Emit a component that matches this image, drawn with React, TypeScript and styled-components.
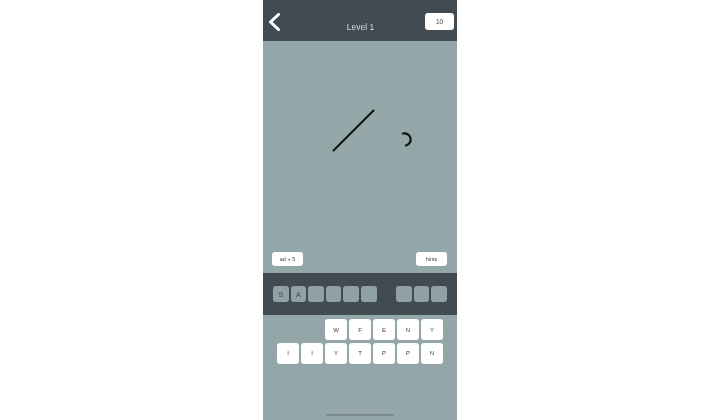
import React from "react";
import styled, { createGlobalStyle } from "styled-components";

const Global = createGlobalStyle`
  html, body { margin: 0; padding: 0; background: #ffffff; }
  body {
    font-family: "Liberation Sans", Arial, sans-serif;
    -webkit-font-smoothing: antialiased;
  }
`;

const Phone = styled.div`
  width: 194px;
  height: 420px;
  margin: 0 auto;
  display: flex;
  flex-direction: column;
  background: #93a6a8;
  overflow: hidden;
  will-change: transform;
`;

const Header = styled.header`
  height: 41px;
  box-sizing: border-box;
  background: #424a52;
  display: grid;
  grid-template-columns: 1fr auto 1fr;
  align-items: start;
  padding: 13px 3px 0 4px;
`;

const Back = styled.svg`
  width: 14px;
  height: 18px;
  display: block;
`;

const Title = styled.div`
  color: #dadcde;
  font-size: 8.5px;
  line-height: 10px;
  margin-top: 8.5px;
`;

const Badge = styled.div`
  justify-self: end;
  width: 29px;
  height: 17px;
  background: #ffffff;
  border-radius: 3px;
  color: #444;
  font-size: 6.5px;
  display: flex;
  align-items: center;
  justify-content: center;
`;

const Canvas = styled.section`
  height: 232px;
  display: flex;
  flex-direction: column;
`;

const Drawing = styled.svg`
  display: block;
  flex: 1;
  width: 100%;
`;

const ButtonRow = styled.div`
  display: flex;
  justify-content: space-between;
  padding: 0 10px 7px 9px;
`;

const SmallButton = styled.button`
  all: unset;
  width: 31px;
  height: 14px;
  background: #ffffff;
  border-radius: 3px;
  color: #444;
  font-size: 5.5px;
  display: flex;
  align-items: center;
  justify-content: center;
  font-family: "Liberation Sans", Arial, sans-serif;
`;

const AnswerBar = styled.div`
  height: 42px;
  background: #424a52;
  display: flex;
  align-items: center;
  justify-content: center;
  gap: 2px;
`;

const Slot = styled.div<{ $space?: boolean }>`
  width: 15.6px;
  height: 16.5px;
  box-sizing: border-box;
  border-radius: 3px;
  background: ${(p) => (p.$space ? "transparent" : "#8fa1a4")};
  color: #3d4347;
  font-size: 7px;
  display: flex;
  align-items: center;
  justify-content: center;
`;

const Keyboard = styled.div`
  flex: 1;
  display: flex;
  flex-direction: column;
  align-items: center;
  padding-top: 4px;
`;

const Keys = styled.div`
  display: grid;
  grid-template-columns: repeat(7, 21.6px);
  grid-auto-rows: 21px;
  column-gap: 2.4px;
  row-gap: 2.6px;
`;

const Key = styled.div<{ $col?: number }>`
  grid-column: ${(p) => (p.$col ? `${p.$col}` : "auto")};
  background: #ffffff;
  border-radius: 3px;
  color: #444;
  font-size: 6px;
  display: flex;
  align-items: center;
  justify-content: center;
`;

const Spacer = styled.div`
  flex: 1;
`;

const HomeIndicator = styled.div`
  width: 68px;
  height: 2.5px;
  border-radius: 2px;
  background: #7d898c;
  margin-bottom: 4px;
`;

const answer = ["S", "A", "", "", "", "", null, "", "", ""];
const row1 = ["W", "F", "E", "N", "Y"];
const row2 = ["I", "I", "Y", "T", "P", "P", "N"];

export default function App() {
  return (
    <>
      <Global />
      <Phone>
        <Header>
          <Back viewBox="0 0 14 18">
            <polyline
              points="11.5,1.5 3.5,9 11.5,16.5"
              fill="none"
              stroke="#ffffff"
              strokeWidth="3"
              strokeLinecap="round"
              strokeLinejoin="round"
            />
          </Back>
          <Title>Level 1</Title>
          <Badge>10</Badge>
        </Header>
        <Canvas>
          <Drawing viewBox="0 0 194 211" preserveAspectRatio="none">
            <line x1="70.5" y1="109.5" x2="110.5" y2="69.5" stroke="#111" strokeWidth="2" strokeLinecap="round" />
            <path d="M140 92.5 A5.3 5.3 0 1 1 143 104.5" fill="none" stroke="#111" strokeWidth="2.2" strokeLinecap="round" />
          </Drawing>
          <ButtonRow>
            <SmallButton>ad + 5</SmallButton>
            <SmallButton>hints</SmallButton>
          </ButtonRow>
        </Canvas>
        <AnswerBar>
          {answer.map((l, i) => (
            <Slot key={i} $space={l === null}>
              {l}
            </Slot>
          ))}
        </AnswerBar>
        <Keyboard>
          <Keys>
            {row1.map((l, i) => (
              <Key key={"a" + i} $col={i === 0 ? 3 : undefined}>
                {l}
              </Key>
            ))}
            {row2.map((l, i) => (
              <Key key={"b" + i}>{l}</Key>
            ))}
          </Keys>
          <Spacer />
          <HomeIndicator />
        </Keyboard>
      </Phone>
    </>
  );
}
